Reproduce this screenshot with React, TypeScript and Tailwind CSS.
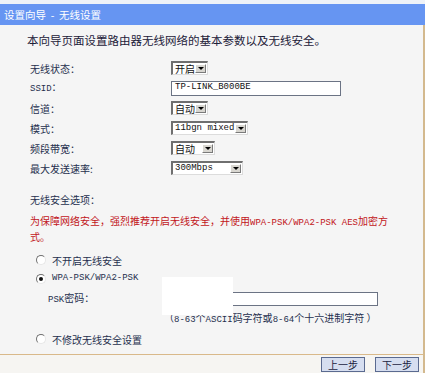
import React from 'react';

const Latin = ({ children }: { children: React.ReactNode }) => (
  <span className="font-['Liberation_Mono',monospace] text-[9px]">{children}</span>
);

function Select({ w, children }: { w: string; children: React.ReactNode }) {
  return (
    <div
      className={`${w} h-[14px] flex items-stretch bg-white border-t-2 border-l-2 border-t-[#6f6f6f] border-l-[#6f6f6f] border-b border-r border-b-[#dcdcdc] border-r-[#dcdcdc]`}
    >
      <div className="flex-1 flex items-center pl-[2px] text-[10px] leading-none text-[#111] whitespace-nowrap">
        {children}
      </div>
      <div className="w-[11px] shrink-0 my-[1px] mr-[1px] bg-[#d8d6d0] border-t border-l border-t-white border-l-white border-b border-r border-b-[#7a7a7a] border-r-[#7a7a7a] flex items-center justify-center">
        <div className="w-0 h-0 border-l-[3px] border-r-[3px] border-t-[3px] border-l-transparent border-r-transparent border-t-black" />
      </div>
    </div>
  );
}

function Radio({ checked }: { checked?: boolean }) {
  return (
    <div className="w-[10px] h-[10px] rounded-full bg-white border border-t-[#6f6f6f] border-l-[#6f6f6f] border-b-[#e6e6e6] border-r-[#e6e6e6] flex items-center justify-center">
      {checked && <div className="w-[4px] h-[4px] rounded-full bg-[#111]" />}
    </div>
  );
}

function Row({ label, children }: { label: React.ReactNode; children: React.ReactNode }) {
  return (
    <div className="h-[20px] flex items-center">
      <div className="w-[171px] pl-[30px] text-[10px] text-[#26304e]">{label}</div>
      {children}
    </div>
  );
}

export default function App() {
  return (
    <div className="w-[425px] h-[373px] bg-white overflow-hidden font-['Noto_Sans_CJK_SC',sans-serif]">
      <div className="h-[4px] bg-[#eef2f8]" />
      <div className="h-[21px] bg-[#6695f2] text-white text-[10.5px] pl-[4px] flex items-center whitespace-pre">
        设置向导  -  无线设置
      </div>
      <div className="w-[425px] h-[348px] flex flex-col border-r-2 border-r-[#d3b98e] bg-[#f5f5f5] relative">
        <div className="mt-[8px] h-[15px] pl-[27px] text-[11.5px] leading-[15px] text-[#1c2038]">
          本向导页面设置路由器无线网络的基本参数以及无线安全。
        </div>

        <div className="mt-[10px] flex flex-col">
          <Row label="无线状态：">
            <Select w="w-[37px]">开启</Select>
          </Row>
          <Row label={<><Latin>SSID</Latin>：</>}>
            <div className="w-[170px] h-[15px] bg-white border border-[#6b7384] flex items-center pl-[3px] text-[#111]">
              <Latin>TP-LINK_B000BE</Latin>
            </div>
          </Row>
          <Row label="信道：">
            <Select w="w-[37px]">自动</Select>
          </Row>
          <Row label="模式：">
            <Select w="w-[77px]">
              <Latin>11bgn mixed</Latin>
            </Select>
          </Row>
          <Row label="频段带宽：">
            <Select w="w-[44px]">自动</Select>
          </Row>
          <Row label="最大发送速率:">
            <Select w="w-[72px]">
              <Latin>300Mbps</Latin>
            </Select>
          </Row>
        </div>

        <div className="mt-[15px] h-[14px] pl-[30px] text-[10px] leading-[14px] text-[#26304e]">无线安全选项：</div>
        <div className="mt-[7px] pl-[30px] text-[10px] leading-[14px] text-[#c2161b] whitespace-nowrap">
          为保障网络安全，强烈推荐开启无线安全，并使用<Latin>WPA-PSK/WPA2-PSK AES</Latin>加密方
          <br />
          式。
        </div>

        <div className="mt-[7px] h-[18px] flex items-center pl-[36px] gap-[6px] text-[10px] text-[#26304e]">
          <Radio />
          <span>不开启无线安全</span>
        </div>
        <div className="mt-[1px] h-[18px] flex items-center pl-[36px] gap-[6px] text-[10px] text-[#26304e]">
          <Radio checked />
          <Latin>WPA-PSK/WPA2-PSK</Latin>
        </div>
        <div className="mt-[2px] h-[17px] flex items-center">
          <div className="w-[162px] pl-[48px] text-[10px] text-[#26304e]">
            <Latin>PSK</Latin>密码：
          </div>
          <div className="w-[216px] h-[14px] bg-white border border-[#6b7384]" />
        </div>
        <div className="mt-[4px] h-[14px] pl-[164px] text-[10px] leading-[14px] text-[#26304e] whitespace-nowrap">
          （<Latin>8-63</Latin>个<Latin>ASCII</Latin>码字符或<Latin>8-64</Latin>个十六进制字符 ）
        </div>
        <div className="mt-[5px] h-[18px] flex items-center pl-[36px] gap-[6px] text-[10px] text-[#26304e]">
          <Radio />
          <span>不修改无线安全设置</span>
        </div>

        <div className="absolute left-[162px] top-[252px] w-[71px] h-[38px] bg-white" />

        <div className="mt-auto border-t border-t-[#d9b98a] h-[19px] flex items-start justify-end gap-[10px] pr-[4px] pt-[2px] bg-[#f6f5f2]">
          <button className="w-[44px] h-[15px] bg-[#d6def0] border border-[#5a6a90] text-[10px] leading-none text-[#1c2340]">
            上一步
          </button>
          <button className="w-[44px] h-[15px] bg-[#d6def0] border border-[#5a6a90] text-[10px] leading-none text-[#1c2340]">
            下一步
          </button>
        </div>
      </div>
    </div>
  );
}
